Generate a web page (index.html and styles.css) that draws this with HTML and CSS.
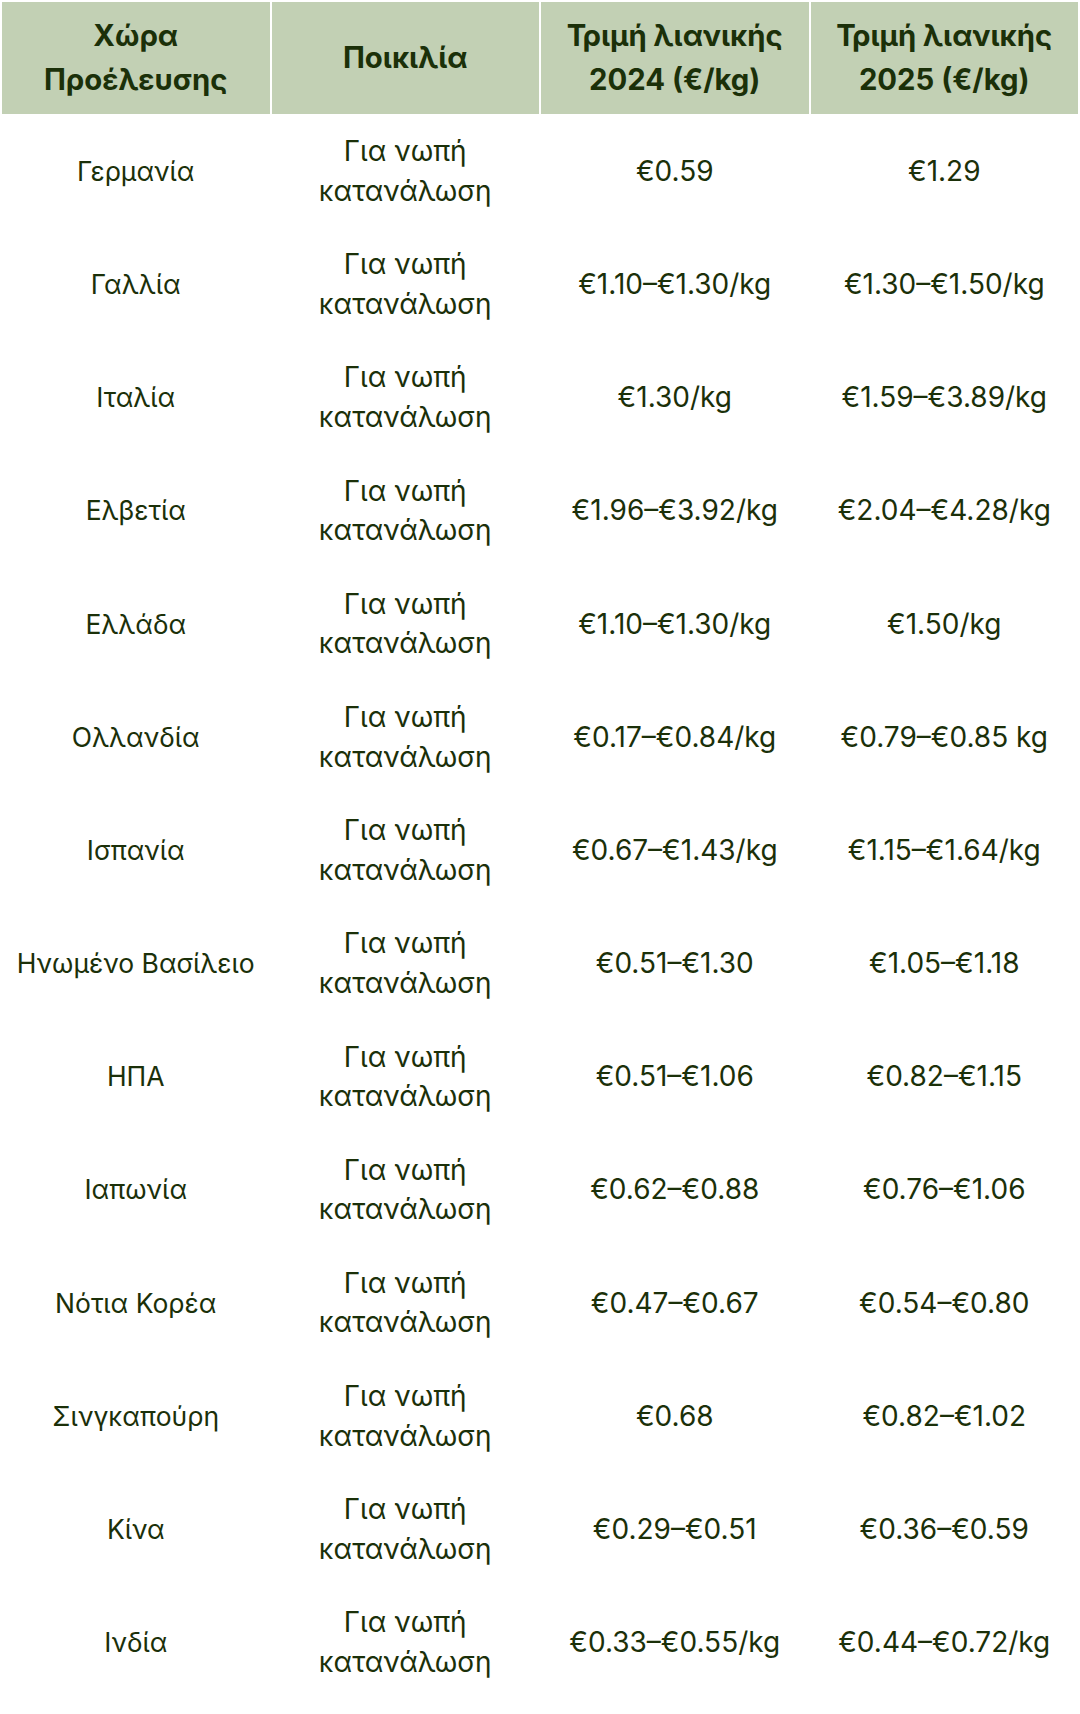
FILE: index.html
```html
<!DOCTYPE html>
<html lang="el">
<head>
<meta charset="utf-8">
<title>Τιμές</title>
<link rel="stylesheet" href="styles.css">
</head>
<body>
<table class="prices">
<thead>
<tr><th>Χώρα Προέλευσης</th><th>Ποικιλία</th><th>Τριμή λιανικής 2024 (€/kg)</th><th>Τριμή λιανικής 2025 (€/kg)</th></tr>
</thead>
<tbody>
<tr><td class="country">Γερμανία</td><td>Για νωπή κατανάλωση</td><td>€0.59</td><td>€1.29</td></tr>
<tr><td class="country">Γαλλία</td><td>Για νωπή κατανάλωση</td><td>€1.10–€1.30/kg</td><td>€1.30–€1.50/kg</td></tr>
<tr><td class="country">Ιταλία</td><td>Για νωπή κατανάλωση</td><td>€1.30/kg</td><td>€1.59–€3.89/kg</td></tr>
<tr><td class="country">Ελβετία</td><td>Για νωπή κατανάλωση</td><td>€1.96–€3.92/kg</td><td>€2.04–€4.28/kg</td></tr>
<tr><td class="country">Ελλάδα</td><td>Για νωπή κατανάλωση</td><td>€1.10–€1.30/kg</td><td>€1.50/kg</td></tr>
<tr><td class="country">Ολλανδία</td><td>Για νωπή κατανάλωση</td><td>€0.17–€0.84/kg</td><td>€0.79–€0.85 kg</td></tr>
<tr><td class="country">Ισπανία</td><td>Για νωπή κατανάλωση</td><td>€0.67–€1.43/kg</td><td>€1.15–€1.64/kg</td></tr>
<tr><td class="country">Ηνωμένο Βασίλειο</td><td>Για νωπή κατανάλωση</td><td>€0.51–€1.30</td><td>€1.05–€1.18</td></tr>
<tr><td class="country">ΗΠΑ</td><td>Για νωπή κατανάλωση</td><td>€0.51–€1.06</td><td>€0.82–€1.15</td></tr>
<tr><td class="country">Ιαπωνία</td><td>Για νωπή κατανάλωση</td><td>€0.62–€0.88</td><td>€0.76–€1.06</td></tr>
<tr><td class="country">Νότια Κορέα</td><td>Για νωπή κατανάλωση</td><td>€0.47–€0.67</td><td>€0.54–€0.80</td></tr>
<tr><td class="country">Σινγκαπούρη</td><td>Για νωπή κατανάλωση</td><td>€0.68</td><td>€0.82–€1.02</td></tr>
<tr><td class="country">Κίνα</td><td>Για νωπή κατανάλωση</td><td>€0.29–€0.51</td><td>€0.36–€0.59</td></tr>
<tr><td class="country">Ινδία</td><td>Για νωπή κατανάλωση</td><td>€0.33–€0.55/kg</td><td>€0.44–€0.72/kg</td></tr>
</tbody>
</table>
</body>
</html>
```

FILE: styles.css
```css
html, body {
  margin: 0;
  padding: 0;
  background: #ffffff;
}
.prices {
  width: 100%;
  border-collapse: separate;
  border-spacing: 2px;
  table-layout: fixed;
  font-family: Inter, sans-serif;
  color: #1b3009;
}
.prices th {
  background: #c2d0b4;
  font-size: 29.3px;
  font-weight: 700;
  line-height: 44px;
  padding: 12px 8px;
  text-align: center;
  vertical-align: middle;
}
.prices td {
  font-size: 28px;
  font-weight: 400;
  line-height: 39.6px;
  padding: 16px 4px;
  text-align: center;
  vertical-align: middle;
}
.prices td.country {
  font-size: 26.5px;
}
```
